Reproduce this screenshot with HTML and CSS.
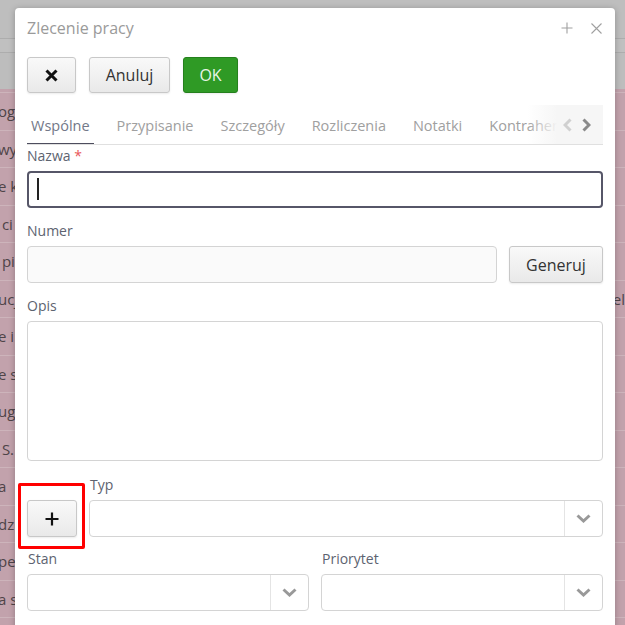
FILE: index.html
```html
<!DOCTYPE html>
<html>
<head>
<meta charset="utf-8">
<link rel="stylesheet" href="styles.css">
</head>
<body>
<div class="app">
  <div class="app-top"></div>
  <div class="app-bar"></div>
  <div class="app-head"></div>
  <div class="rows">
    <div class="row"><span class="l">og</span><span class="r"></span></div>
    <div class="row"><span class="l">wy</span><span class="r"></span></div>
    <div class="row"><span class="l">e k</span><span class="r"></span></div>
    <div class="row"><span class="l">&nbsp;ci</span><span class="r"></span></div>
    <div class="row"><span class="l">&nbsp;pi</span><span class="r"></span></div>
    <div class="row"><span class="l">ucj</span><span class="r">el</span></div>
    <div class="row"><span class="l">e i</span><span class="r"></span></div>
    <div class="row"><span class="l">e s</span><span class="r"></span></div>
    <div class="row"><span class="l">ug</span><span class="r"></span></div>
    <div class="row"><span class="l">&nbsp;S.</span><span class="r"></span></div>
    <div class="row"><span class="l">a</span><span class="r"></span></div>
    <div class="row"><span class="l">dz</span><span class="r"></span></div>
    <div class="row"><span class="l">pe</span><span class="r"></span></div>
    <div class="row"><span class="l">a s</span><span class="r"></span></div>
    <div class="row"><span class="l"></span><span class="r"></span></div>
  </div>
</div>

<div class="modal">
  <div class="modal-head">
    <span class="modal-title">Zlecenie pracy</span>
    <span class="head-icons">
      <svg class="hi-plus" width="12" height="12" viewBox="0 0 12 12"><path d="M6 0.5V11.5M0.5 6H11.5" stroke="#a0a0a0" stroke-width="1.1" fill="none"/></svg>
      <svg class="hi-close" width="11" height="11" viewBox="0 0 11 11"><path d="M0.5 0.5L10.5 10.5M10.5 0.5L0.5 10.5" stroke="#a0a0a0" stroke-width="1.1" fill="none"/></svg>
    </span>
  </div>

  <div class="toolbar">
    <button class="btn btn-x"><svg width="13" height="13" viewBox="0 0 13 13"><path d="M1.5 1.5L11.5 11.5M11.5 1.5L1.5 11.5" stroke="#111" stroke-width="3" fill="none"/></svg></button>
    <button class="btn btn-cancel">Anuluj</button>
    <button class="btn btn-ok">OK</button>
  </div>

  <div class="tabs">
    <div class="tab-list">
      <span class="tab active">Wspólne</span>
      <span class="tab">Przypisanie</span>
      <span class="tab">Szczegóły</span>
      <span class="tab">Rozliczenia</span>
      <span class="tab">Notatki</span>
      <span class="tab">Kontrahenci</span>
    </div>
    <div class="tab-nav">
      <svg width="9" height="14" viewBox="0 0 9 14"><path d="M7.5 1.5L2 7L7.5 12.5" stroke="#d0d0d0" stroke-width="3" fill="none"/></svg>
      <svg width="9" height="14" viewBox="0 0 9 14"><path d="M1.5 1.5L7 7L1.5 12.5" stroke="#8a8a8a" stroke-width="3" fill="none"/></svg>
    </div>
  </div>

  <div class="form">
    <div class="field first">
      <div class="label">Nazwa <span class="req">*</span></div>
      <div class="input focused"><span class="caret"></span></div>
    </div>

    <div class="field">
      <div class="label">Numer</div>
      <div class="inline">
        <div class="input muted"></div>
        <button class="btn btn-gen">Generuj</button>
      </div>
    </div>

    <div class="field">
      <div class="label">Opis</div>
      <div class="textarea"></div>
    </div>

    <div class="typ-row">
      <div class="plus-wrap">
        <button class="btn btn-plus"><svg width="14" height="14" viewBox="0 0 14 14"><path d="M7 0.5V13.5M0.5 7H13.5" stroke="#111" stroke-width="2.2" fill="none"/></svg></button>
        <span class="highlight"></span>
      </div>
      <div class="grow">
        <div class="label typ-label">Typ</div>
        <div class="select"><div class="sel-val"></div><div class="sel-btn"><svg width="15" height="9" viewBox="0 0 15 9"><path d="M1.5 1.5L7.5 7L13.5 1.5" stroke="#999" stroke-width="3" fill="none"/></svg></div></div>
      </div>
    </div>

    <div class="two-col">
      <div>
        <div class="label">Stan</div>
        <div class="select"><div class="sel-val"></div><div class="sel-btn"><svg width="15" height="9" viewBox="0 0 15 9"><path d="M1.5 1.5L7.5 7L13.5 1.5" stroke="#999" stroke-width="3" fill="none"/></svg></div></div>
      </div>
      <div>
        <div class="label">Priorytet</div>
        <div class="select"><div class="sel-val"></div><div class="sel-btn"><svg width="15" height="9" viewBox="0 0 15 9"><path d="M1.5 1.5L7.5 7L13.5 1.5" stroke="#999" stroke-width="3" fill="none"/></svg></div></div>
      </div>
    </div>
  </div>
</div>
</body>
</html>
```

FILE: styles.css
```css
* { box-sizing: border-box; }
html, body { margin: 0; padding: 0; }
body {
  width: 625px;
  height: 625px;
  overflow: hidden;
  position: relative;
  font-family: "Open Sans", "DejaVu Sans", sans-serif;
  background: #c2a2ac;
}

/* background app (dimmed) */
.app-top { height: 39px; background: #bebebe; border-bottom: 1px solid #adadad; }
.app-bar { height: 14px; background: #c0c0c0; border-bottom: 1px solid #adadad; }
.app-head { height: 36px; background: #bdbdbd; }
.rows { padding-top: 3px; background: #c2a2ac; }
.row {
  height: 37.5px;
  border-top: 1px solid #cdb4bb;
  display: flex;
  justify-content: space-between;
  align-items: center;
  font-size: 15px;
  color: #4e4448;
  white-space: pre;
}
.row .l { margin-left: -2px; }
.row .r { margin-right: 0; }

/* modal */
.modal {
  position: absolute;
  left: 15px;
  top: 8px;
  width: 600px;
  height: 650px;
  background: #fff;
  border-radius: 4px;
  box-shadow: 0 1px 6px rgba(0, 0, 0, 0.25);
  padding: 0 12px;
}
.modal-head {
  height: 40px;
  display: flex;
  align-items: center;
  justify-content: space-between;
}
.modal-title { font-size: 16px; color: #9a9a9a; }
.head-icons { display: flex; align-items: center; gap: 18px; margin-right: 1px; }
.head-icons svg { display: block; }

.toolbar { margin-top: 9px; display: flex; gap: 13px; height: 36px; }
.btn {
  font-family: "Open Sans", "DejaVu Sans", sans-serif;
  font-size: 16px;
  color: #333;
  height: 36px;
  border: 1px solid #c8c8c8;
  border-radius: 3px;
  background: linear-gradient(#f9f9f9, #e9e9e9);
  box-shadow: 0 1px 2px rgba(0, 0, 0, 0.08);
  padding: 0;
  display: flex;
  align-items: center;
  justify-content: center;
}
.btn-x { width: 49px; }
.btn-cancel { width: 81px; }
.btn-ok {
  width: 55px;
  background: #2f9a25;
  border-color: #25801d;
  color: #eaf5e7;
}

/* tabs */
.tabs {
  margin-top: 12px;
  height: 40px;
  border-bottom: 1px solid #e0e0e0;
  position: relative;
  overflow: hidden;
}
.tab-list { display: flex; gap: 19px; height: 39px; white-space: nowrap; }
.tab {
  position: relative;
  height: 39px;
  padding: 2px 4px 0;
  display: flex;
  align-items: center;
  font-size: 14.5px;
  color: #a0a0a0;
}
.tab.active { color: #737888; }
.tab.active::after {
  content: "";
  position: absolute;
  left: 0;
  right: 0;
  bottom: -1px;
  height: 2px;
  background: #4d4d5e;
}
.tab-nav {
  position: absolute;
  right: 0;
  top: 0;
  width: 76px;
  height: 39px;
  display: flex;
  align-items: center;
  justify-content: flex-end;
  gap: 10px;
  padding-right: 12px;
  background: linear-gradient(to right, rgba(246, 246, 246, 0), #f6f6f6 40%);
}
.tab-nav svg { display: block; }

/* form */
.field { margin-top: 13px; }
.field.first { margin-top: 1px; }
.label { font-size: 14px; line-height: 20px; color: #5d6370; margin-bottom: 5px; }
.req { color: #e8575a; }
.input {
  height: 37px;
  border: 1px solid #d4d4d4;
  border-radius: 4px;
  background: #fff;
  position: relative;
}
.input.focused { border: 2px solid #565668; }
.input.muted { background: #fafafa; flex: 1; }
.caret {
  position: absolute;
  left: 8px;
  top: 5px;
  width: 1.5px;
  height: 22px;
  background: #222;
}
.inline { display: flex; gap: 12px; }
.btn-gen { width: 94px; height: 37px; }
.textarea {
  height: 140px;
  border: 1px solid #d4d4d4;
  border-radius: 4px;
  background: #fff;
}

.typ-row { margin-top: 14px; display: flex; align-items: flex-end; gap: 12px; }
.plus-wrap { position: relative; width: 50px; }
.btn-plus { width: 50px; height: 37px; }
.highlight {
  position: absolute;
  left: -9px;
  top: -17px;
  width: 67px;
  height: 66px;
  border: 3px solid #f00;
  border-radius: 2px;
}
.grow { flex: 1; }
.typ-label { padding-left: 1px; }

.select {
  height: 37px;
  border: 1px solid #d4d4d4;
  border-radius: 4px;
  background: #fff;
  display: flex;
}
.sel-val { flex: 1; }
.sel-btn {
  width: 38px;
  border-left: 1px solid #e4e4e4;
  display: flex;
  align-items: center;
  justify-content: center;
}
.sel-btn svg { display: block; }

.two-col {
  margin-top: 12px;
  display: grid;
  grid-template-columns: 1fr 1fr;
  gap: 12px;
}
.two-col .label { padding-left: 1px; }
```
